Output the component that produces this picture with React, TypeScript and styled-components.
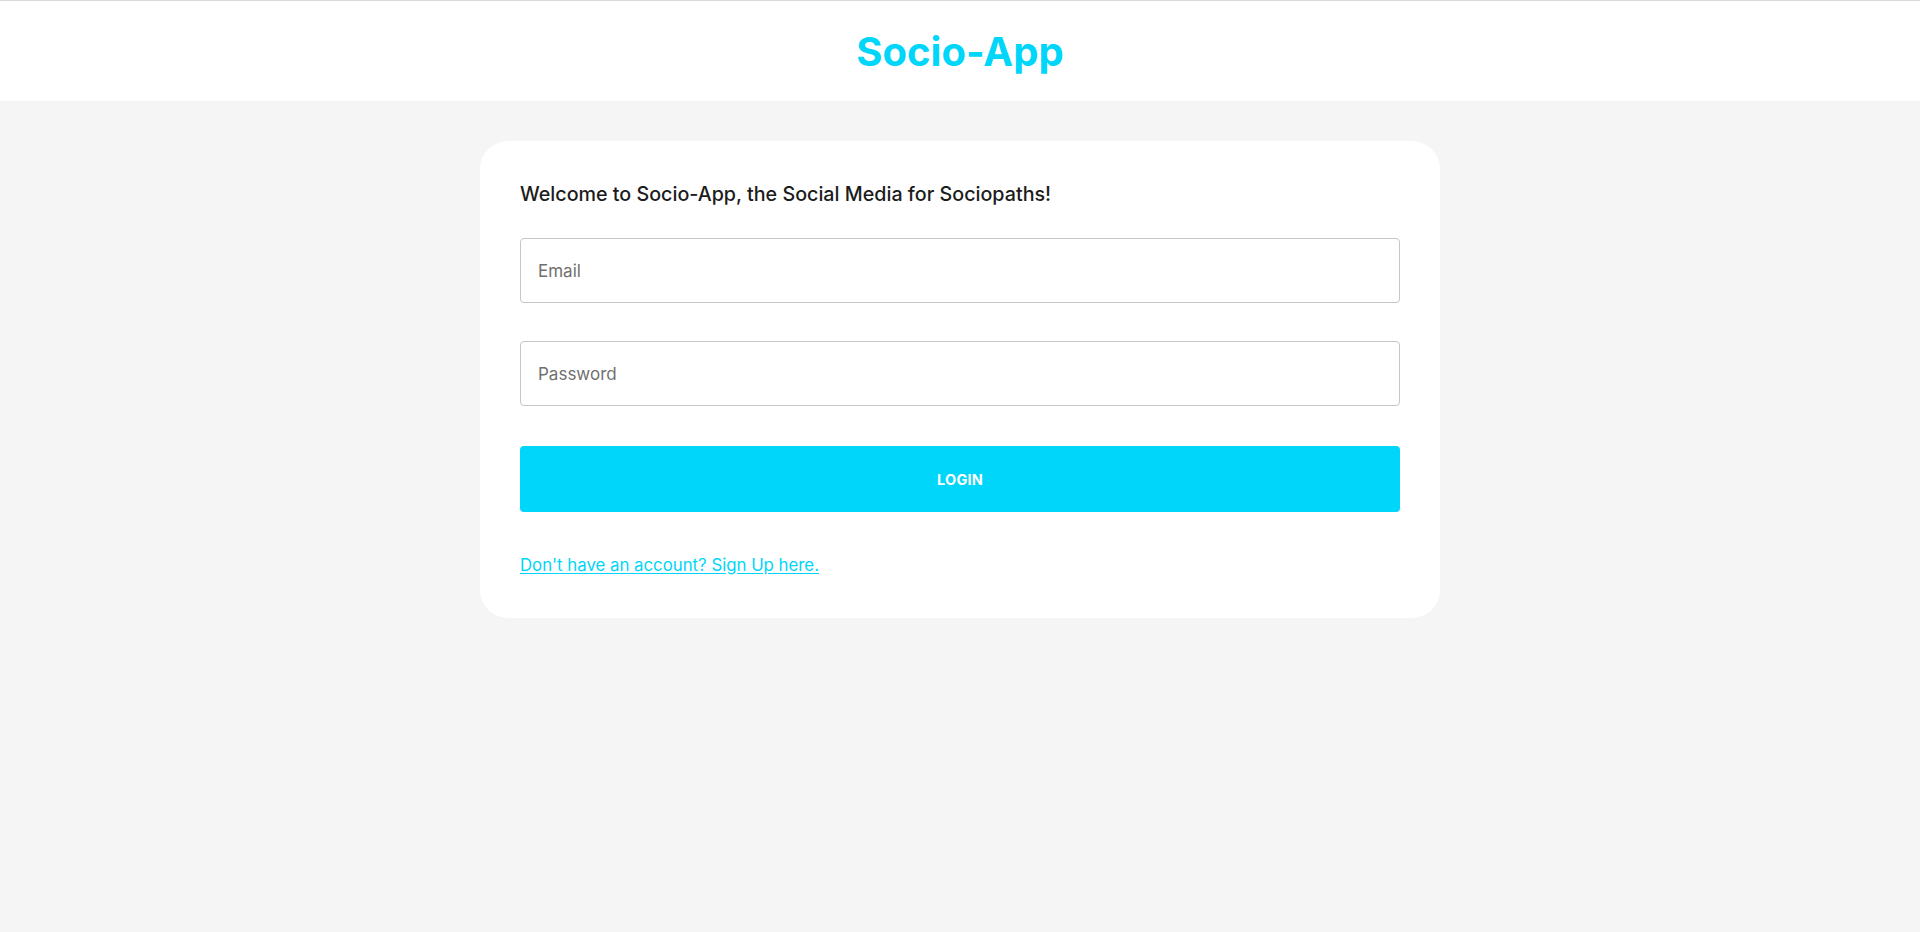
import React from "react";
import styled, { createGlobalStyle } from "styled-components";

const Global = createGlobalStyle`
  * { box-sizing: border-box; }
  html, body { margin: 0; padding: 0; }
  body {
    background: #f5f5f5;
    font-family: Inter, "Noto Sans", "Liberation Sans", sans-serif;
    min-height: 932px;
  }
`;

const CYAN = "#00d5fa";

const Header = styled.header`
  height: 101px;
  background: #ffffff;
  border-top: 1px solid #dadada;
  display: flex;
  align-items: center;
  justify-content: center;
`;

const Title = styled.h1`
  margin: 0;
  font-size: 40px;
  font-weight: 700;
  color: ${CYAN};
  letter-spacing: 0;
`;

const Main = styled.main`
  display: flex;
  justify-content: center;
  padding-top: 40px;
`;

const Card = styled.form`
  width: 960px;
  background: #ffffff;
  border-radius: 28px;
  padding: 41px 40px 42px;
  display: flex;
  flex-direction: column;
`;

const Heading = styled.h2`
  margin: 0 0 31px;
  font-size: 19.7px;
  line-height: 25px;
  font-weight: 500;
  color: #1c1c1c;
`;

const Input = styled.input<{ $gap: number }>`
  height: 65px;
  width: 100%;
  margin-bottom: ${(p) => p.$gap}px;
  padding: 0 17px;
  border: 1px solid #c6c6c6;
  border-radius: 4px;
  font-family: inherit;
  font-size: 17px;
  color: #333;
  background: #fff;
  outline: none;
  &::placeholder {
    color: #707070;
  }
`;

const Button = styled.button`
  height: 66px;
  width: 100%;
  border: none;
  border-radius: 4px;
  background: ${CYAN};
  color: #ffffff;
  font-family: inherit;
  font-size: 14.5px;
  font-weight: 700;
  letter-spacing: 0.2px;
  cursor: pointer;
  margin-bottom: 42px;
`;

const SignUp = styled.a`
  align-self: flex-start;
  color: ${CYAN};
  font-size: 16.8px;
  line-height: 22px;
  text-decoration: underline;
  text-underline-offset: 2px;
  cursor: pointer;
`;

export default function App() {
  return (
    <>
      <Global />
      <Header>
        <Title>Socio-App</Title>
      </Header>
      <Main>
        <Card onSubmit={(e) => e.preventDefault()}>
          <Heading>Welcome to Socio-App, the Social Media for Sociopaths!</Heading>
          <Input $gap={38} type="email" placeholder="Email" />
          <Input $gap={40} type="password" placeholder="Password" />
          <Button type="submit">LOGIN</Button>
          <SignUp href="#">Don't have an account? Sign Up here.</SignUp>
        </Card>
      </Main>
    </>
  );
}
